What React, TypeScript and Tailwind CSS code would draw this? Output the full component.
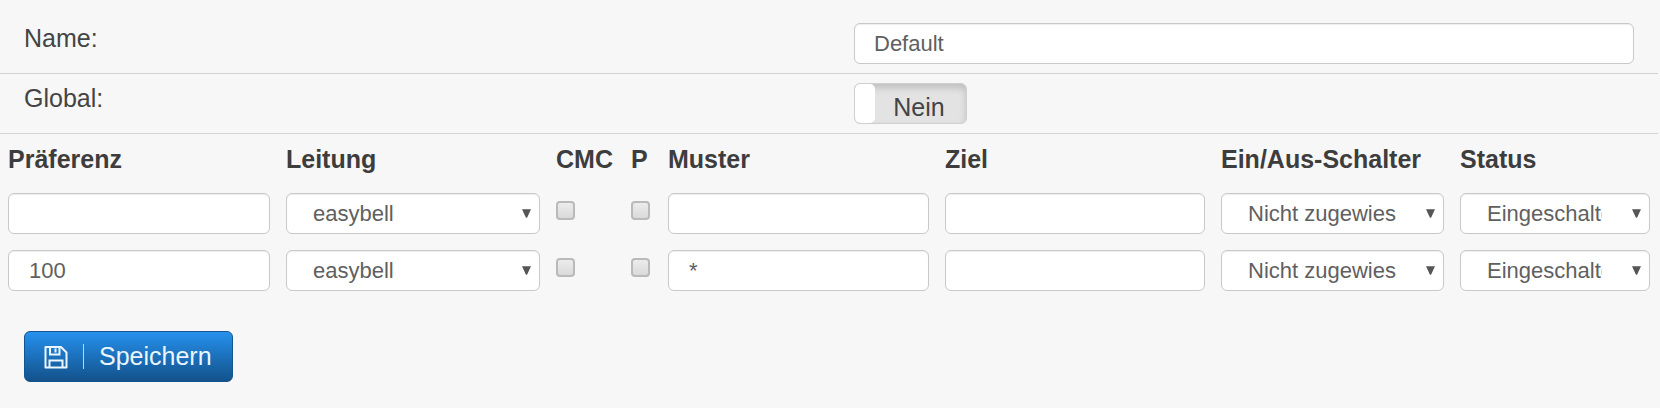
import { useState, type ReactNode } from "react";

const field =
  "block h-[41px] w-full rounded-md border border-[#c9c9c9] bg-white text-[22px] leading-7 text-[#606060] shadow-[inset_0_1px_1px_rgba(0,0,0,0.07)] outline-none focus:border-[#66afe9]";

function TextInput({ label, initial = "" }: { label: string; initial?: string }) {
  return (
    <input
      type="text"
      aria-label={label}
      defaultValue={initial}
      className={`${field} px-5`}
    />
  );
}

function Select({ label, options }: { label: string; options: string[] }) {
  return (
    <div className="grid items-center">
      <select
        aria-label={label}
        className={`${field} col-start-1 row-start-1 appearance-none pl-[26px] pr-[47px]`}
      >
        {options.map((option) => (
          <option key={option}>{option}</option>
        ))}
      </select>
      <svg
        viewBox="0 0 10 10"
        aria-hidden="true"
        className="pointer-events-none col-start-1 row-start-1 mr-[9px] size-[9px] justify-self-end fill-[#555]"
      >
        <path d="M0 0.3h10L5.6 9.7H4.4z" />
      </svg>
    </div>
  );
}

function Checkbox({ label }: { label: string }) {
  return (
    <input
      type="checkbox"
      aria-label={label}
      className="mt-2 block size-[19px] appearance-none rounded-[4px] border-2 border-[#bababa] bg-linear-to-b from-[#ececec] to-[#dadada] checked:from-[#2a8be0] checked:to-[#1560a8]"
    />
  );
}

function FormRow({ label, htmlFor, children }: { label: string; htmlFor: string; children: ReactNode }) {
  return (
    <div className="grid grid-cols-2 border-b border-[#d2d2d2] py-[9px]">
      <label htmlFor={htmlFor} className="pl-6 leading-[30px]">
        {label}
      </label>
      <div className="pl-[25px] pr-6">{children}</div>
    </div>
  );
}

function Toggle({ id }: { id: string }) {
  const [on, setOn] = useState(false);
  return (
    <button
      id={id}
      type="button"
      role="switch"
      aria-checked={on}
      onClick={() => setOn(!on)}
      className="flex h-[41px] w-[113px] overflow-hidden rounded-md border border-[#cfcfcf] bg-[#e3e3e3] shadow-[inset_0_4px_7px_rgba(0,0,0,0.16)]"
    >
      <span className="h-full w-5 rounded-[5px] bg-white" />
      <span className="flex-1 pt-2 pr-[3px] text-center leading-[30px]">{on ? "Ja" : "Nein"}</span>
    </button>
  );
}

function SaveIcon() {
  return (
    <svg viewBox="0 0 24 24" aria-hidden="true" className="size-6 fill-none stroke-current stroke-2">
      <path d="M1.5 2h15.5l5.5 5.5V22.5h-21z" strokeLinejoin="round" />
      <path d="M6 2v7.5h9.5V2M5.5 22.5v-7h13v7" />
      <path d="M11.5 3.5v4" />
    </svg>
  );
}

const rows = [
  { preference: "", pattern: "" },
  { preference: "100", pattern: "*" },
];

const headings = ["Präferenz", "Leitung", "CMC", "P", "Muster", "Ziel", "Ein/Aus-Schalter", "Status"];

export default function App() {
  return (
    <main className="min-h-screen bg-[#f7f7f7] pt-3.5 font-['Liberation_Sans',Arial,sans-serif] text-[25px] text-[#444]">
      <form className="mr-0.5" onSubmit={(event) => event.preventDefault()}>
        <FormRow label="Name:" htmlFor="name">
          <input id="name" type="text" defaultValue="Default" className={`${field} px-[19px]`} />
        </FormRow>
        <FormRow label="Global:" htmlFor="global">
          <Toggle id="global" />
        </FormRow>

        <table className="w-full table-fixed text-left">
          <colgroup>
            <col className="w-[278px]" />
            <col className="w-[270px]" />
            <col className="w-[75px]" />
            <col className="w-[37px]" />
            <col className="w-[277px]" />
            <col className="w-[276px]" />
            <col className="w-[239px]" />
            <col className="w-[206px]" />
          </colgroup>
          <thead>
            <tr>
              {headings.map((heading) => (
                <th
                  key={heading}
                  scope="col"
                  className="px-2 pt-[10px] pb-[11px] leading-[30px] font-bold whitespace-nowrap text-[#3d3d3d]"
                >
                  {heading}
                </th>
              ))}
            </tr>
          </thead>
          <tbody className="align-top">
            {rows.map((row, index) => (
              <tr key={index}>
                <td className="p-2">
                  <TextInput label="Präferenz" initial={row.preference} />
                </td>
                <td className="p-2">
                  <Select label="Leitung" options={["easybell"]} />
                </td>
                <td className="p-2">
                  <Checkbox label="CMC" />
                </td>
                <td className="p-2">
                  <Checkbox label="P" />
                </td>
                <td className="p-2">
                  <TextInput label="Muster" initial={row.pattern} />
                </td>
                <td className="p-2">
                  <TextInput label="Ziel" />
                </td>
                <td className="p-2">
                  <Select label="Ein/Aus-Schalter" options={["Nicht zugewiesen"]} />
                </td>
                <td className="p-2">
                  <Select label="Status" options={["Eingeschaltet", "Ausgeschaltet"]} />
                </td>
              </tr>
            ))}
          </tbody>
        </table>

        <button
          type="submit"
          className="mt-8 ml-6 flex h-[51px] items-center rounded-md border border-[#14558f] bg-linear-to-b from-[#2691ed] to-[#12528c] pr-5 pl-[19px] text-[#eaf5ff]"
        >
          <SaveIcon />
          <span className="mx-[15px] h-[25px] w-px bg-[#b5d8f5]" />
          <span className="pb-0.5 leading-[30px]">Speichern</span>
        </button>
      </form>
    </main>
  );
}
